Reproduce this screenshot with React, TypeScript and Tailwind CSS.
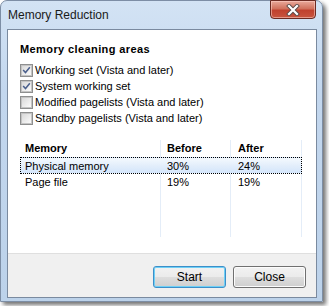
import React from "react";

const Checkbox = ({ checked }: { checked: boolean }) => (
    <span className="w-[13px] h-[13px] border border-[#8e8f8f] bg-white flex items-center justify-center shrink-0">
        <span className="w-[11px] h-[11px] border border-[#c4c4c4] bg-gradient-to-br from-[#d9d9d9] to-[#fbfbfb] flex items-center justify-center">
            {checked && (
                <svg width="11" height="11" viewBox="0 0 11 11">
                    <path d="M2 5.5 L4.3 8 L9 2.2" fill="none" stroke="#4a5f8c" strokeWidth="1.8" strokeLinecap="square" />
                </svg>
            )}
        </span>
    </span>
);

const areas = [
    { label: "Working set (Vista and later)", checked: true },
    { label: "System working set", checked: true },
    { label: "Modified pagelists (Vista and later)", checked: false },
    { label: "Standby pagelists (Vista and later)", checked: false },
];

const cols = "grid grid-cols-[141px_70px_71px]";
const cell = "border-r border-[#e4edf8] h-full flex items-center";

const WinButton = ({ label, isDefault }: { label: string; isDefault?: boolean }) => (
    <button
        type="button"
        className={
            "w-[73px] h-[22px] rounded-[3px] border text-[12px] text-black bg-[linear-gradient(to_bottom,#f2f2f2_0%,#ebebeb_48%,#dddddd_52%,#cfcfcf_100%)] " +
            (isDefault
                ? "border-[#3c8fc9] shadow-[inset_0_0_0_1px_#6fd0f6]"
                : "border-[#707070] shadow-[inset_0_0_0_1px_#fcfcfc]")
        }
    >
        {label}
    </button>
);

export default function App() {
    return (
        <div className="w-[329px] h-[306px] bg-white overflow-hidden font-['Liberation_Sans',Arial,sans-serif] text-black">
            <div className="relative w-[323px] h-[302px] rounded-t-[7px] border border-[#7d8ea5] bg-[linear-gradient(to_bottom,#d3e3f4_0%,#c3d7ee_30%,#bcd2ea_100%)] shadow-[3px_3px_4px_rgba(0,0,0,0.55)] flex flex-col">
                <div className="h-[28px] pl-[7px] flex items-center text-[12px] text-[#1a1a1a]">
                    Memory Reduction
                </div>
                <div className="absolute top-[-1px] right-[6px] w-[46px] h-[19px] rounded-b-[4px] border border-[#6b2a22] bg-[linear-gradient(to_bottom,#e9a99b_0%,#d0715d_45%,#c0412e_55%,#c8553f_100%)] shadow-[inset_0_0_0_1px_rgba(255,210,200,0.55)] flex items-center justify-center">
                    <svg width="14" height="12" viewBox="0 0 14 12">
                        <path d="M3 2 L11 10 M11 2 L3 10" stroke="#5a4a48" strokeWidth="4" strokeLinecap="square" />
                        <path d="M3 2 L11 10 M11 2 L3 10" stroke="#ffffff" strokeWidth="2.2" strokeLinecap="square" />
                    </svg>
                </div>
                <div className="ml-[6px] mr-[5px] mb-[3px] h-[269px] border border-[#7a8a9f] flex flex-col bg-white">
                    <div className="h-[223px] pt-[12px] pl-[12px] flex flex-col">
                        <div className="text-[11px] leading-[14px] font-bold tracking-[0.4px]">Memory cleaning areas</div>
                        <div className="mt-[6px] flex flex-col">
                            {areas.map((a) => (
                                <div key={a.label} className="h-[16px] flex items-center gap-[2px] text-[11px]">
                                    <Checkbox checked={a.checked} />
                                    <span>{a.label}</span>
                                </div>
                            ))}
                        </div>
                        <div className="mt-[14px] w-[282px] h-[97px] flex flex-col text-[11px]">
                            <div className={cols + " h-[17px] font-bold"}>
                                <div className={cell + " pl-[5px]"}>Memory</div>
                                <div className={cell + " pl-[6px]"}>Before</div>
                                <div className={cell + " pl-[7px]"}>After</div>
                            </div>
                            <div className={cols + " h-[17px] border border-dotted border-black bg-[linear-gradient(to_bottom,#f4f9fe_0%,#e3eefb_50%,#d3e5fb_100%)]"}>
                                <div className="flex items-center pl-[4px]">Physical memory</div>
                                <div className="flex items-center pl-[5px]">30%</div>
                                <div className="flex items-center pl-[6px]">24%</div>
                            </div>
                            <div className={cols + " h-[17px]"}>
                                <div className={cell + " pl-[5px]"}>Page file</div>
                                <div className={cell + " pl-[6px]"}>19%</div>
                                <div className={cell + " pl-[7px]"}>19%</div>
                            </div>
                            <div className={cols + " flex-1"}>
                                <div className={cell}></div>
                                <div className={cell}></div>
                                <div className={cell}></div>
                            </div>
                        </div>
                    </div>
                    <div className="h-[1px] bg-[#dfdfdf]"></div>
                    <div className="flex-1 bg-[#f0f0f0] flex justify-end items-start pt-[12px] pr-[10px] gap-[7px]">
                        <WinButton label="Start" isDefault />
                        <WinButton label="Close" />
                    </div>
                </div>
            </div>
        </div>
    );
}
